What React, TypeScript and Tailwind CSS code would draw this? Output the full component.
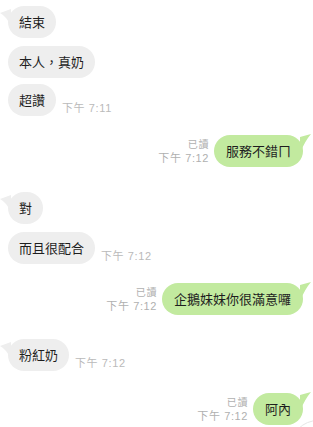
import React from 'react'

const cjk = { fontFamily: '"Noto Sans CJK TC", "Noto Sans CJK SC", sans-serif' }
const meta = { fontFamily: '"Liberation Sans", "Noto Sans CJK TC", sans-serif' }

// gray incoming bubble
const In = ({ text, tail, time, className }: { text: string; tail?: boolean; time?: string; className?: string }) => (
  <div className={`flex items-end pl-2 ${className ?? ''}`}>
    <div className="relative h-8 px-[11px] rounded-2xl bg-[#eeeeee] flex items-center text-[13px] text-[#1e1e1e]" style={cjk}>
      {tail && (
        <svg className="absolute -left-2 top-0" width="12" height="24" viewBox="0 0 12 24">
          <path d="M11 3 L0 7 Q6 10 11 20 Z" fill="#eeeeee" />
        </svg>
      )}
      <span className="relative">{text}</span>
    </div>
    {time && (
      <span className="ml-[6px] mb-[2px] text-[11px] leading-3 tracking-[0.6px] text-[#bababa]" style={meta}>
        {time}
      </span>
    )}
  </div>
)

// green outgoing bubble
const Out = ({ text, className }: { text: string; className?: string }) => (
  <div className={`flex items-end justify-end pr-[10px] ${className ?? ''}`}>
    <div className="flex flex-col items-end mr-[5px] mb-[1px] text-[11px] leading-[15px] tracking-[0.6px] text-[#b0b0b0]" style={meta}>
      <span className="text-[10px]" style={cjk}>已讀</span>
      <span>下午 7:12</span>
    </div>
    <div className="relative h-8 px-[12px] rounded-2xl bg-[#c2ea9f] flex items-center text-[13px] text-[#1e1e1e]" style={cjk}>
      <svg className="absolute -right-[9px] -top-[2px]" width="13" height="24" viewBox="0 0 13 24">
        <path d="M1 4 L12 1 Q6 8 1 20 Z" fill="#c2ea9f" />
      </svg>
      <span className="relative">{text}</span>
    </div>
  </div>
)

export default function App() {
  return (
    <div className="relative w-[313px] h-[427px] overflow-hidden bg-white">
      <div className="flex flex-col pt-[6px]">
        <In text="結束" tail />
        <In text="本人，真奶" className="mt-2" />
        <In text="超讚" time="下午 7:11" className="mt-[6px]" />
        <Out text="服務不錯ㄇ" className="mt-[19px]" />
        <In text="對" tail className="mt-[25px]" />
        <In text="而且很配合" time="下午 7:12" className="mt-2" />
        <Out text="企鵝妹妹你很滿意囉" className="mt-[19px]" />
        <In text="粉紅奶" tail time="下午 7:12" className="mt-6" />
        <Out text="阿內" className="mt-[22px]" />
      </div>
      <div className="absolute left-[290px] top-[420px] w-14 h-14 rounded-full bg-white border border-[#e6e6e6]" />
    </div>
  )
}
